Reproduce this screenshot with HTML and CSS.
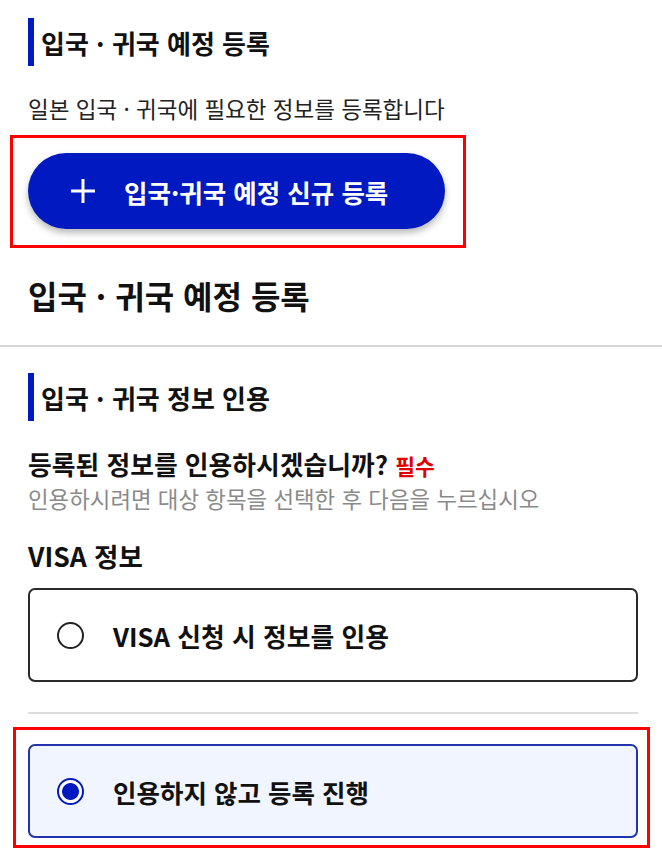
FILE: index.html
```html
<!DOCTYPE html>
<html lang="ko">
<head>
<meta charset="utf-8">
<title>입국 · 귀국 예정 등록</title>
<link rel="stylesheet" href="styles.css">
</head>
<body>
<main class="page">
  <section class="sec">
    <h2 class="bar-title">입국 · 귀국 예정 등록</h2>
    <p class="subtitle">일본 입국 · 귀국에 필요한 정보를 등록합니다</p>
    <div class="mark mark-btn">
      <button class="new-btn" type="button">
        <svg class="plus" width="26" height="26" viewBox="0 0 26 26" aria-hidden="true">
          <path d="M13 1v24M1 13h24" stroke="#fff" stroke-width="3" fill="none"/>
        </svg>
        <span>입국·귀국 예정 신규 등록</span>
      </button>
    </div>
    <h1 class="page-title">입국 · 귀국 예정 등록</h1>
  </section>
  <hr class="rule-full">
  <section class="sec">
    <h2 class="bar-title bar-title-2">입국 · 귀국 정보 인용</h2>
    <p class="question">등록된 정보를 인용하시겠습니까? <span class="req">필수</span></p>
    <p class="hint">인용하시려면 대상 항목을 선택한 후 다음을 누르십시오</p>
    <h3 class="group-label">VISA 정보</h3>
    <label class="option">
      <span class="radio"></span>
      <span class="option-text">VISA 신청 시 정보를 인용</span>
    </label>
    <hr class="rule-inner">
    <div class="mark mark-opt">
      <label class="option option-on">
        <span class="radio radio-on"></span>
        <span class="option-text">인용하지 않고 등록 진행</span>
      </label>
    </div>
  </section>
</main>
</body>
</html>
```
FILE: styles.css
```css
* { box-sizing: border-box; }
html, body { margin: 0; padding: 0; background: #fff; }
body {
  font-family: "Noto Sans CJK KR", "Noto Sans", sans-serif;
  color: #111;
}
.page { padding-top: 18px; }
.sec { padding: 0 24px 0 28px; }
.bar-title {
  margin: 0;
  height: 48px;
  display: flex;
  align-items: center;
  border-left: 6px solid #0019c0;
  padding-left: 7px;
  font-size: 26px;
  font-weight: 700;
}
.subtitle {
  margin: 27px 0 0;
  font-size: 22.5px;
  line-height: 30px;
  color: #222;
}
.mark { border: 3px solid #f00; }
.mark-btn {
  display: inline-block;
  margin: 12px 0 0 -18px;
  padding: 15px 18px 16px 15px;
}
.new-btn {
  display: flex;
  align-items: center;
  gap: 28px;
  width: 417px;
  height: 76px;
  padding: 0 0 0 42px;
  border: 0;
  border-radius: 38px;
  background: #0019c0;
  color: #fff;
  font-family: inherit;
  font-size: 25.5px;
  font-weight: 700;
  box-shadow: 0 4px 7px rgba(0, 0, 0, 0.28);
}
.plus { flex: none; }
.page-title {
  margin: 27px 0 0;
  font-size: 32px;
  line-height: 40px;
  font-weight: 700;
}
.rule-full {
  margin: 30px 0 0;
  border: 0;
  height: 2px;
  background: #d6d6d6;
}
.bar-title-2 { margin-top: 26px; }
.question {
  margin: 28px 0 0;
  font-size: 25.8px;
  line-height: 30px;
  font-weight: 700;
}
.req { color: #e00000; font-size: 21.5px; }
.hint {
  margin: 2px 0 0;
  font-size: 22.4px;
  line-height: 30px;
  color: #8a8a8a;
}
.group-label {
  margin: 28px 0 0;
  font-size: 26.5px;
  line-height: 30px;
  font-weight: 700;
}
.option {
  display: flex;
  align-items: center;
  gap: 29px;
  height: 94px;
  margin-top: 17px;
  padding-left: 27px;
  border: 2px solid #2a2a2a;
  border-radius: 7px;
  background: #fff;
}
.option-text {
  font-size: 25.8px;
  font-weight: 700;
}
.option-on .option-text { font-size: 25.5px; }
.radio {
  flex: none;
  width: 27px;
  height: 27px;
  border: 2px solid #222;
  border-radius: 50%;
}
.radio-on {
  border-color: #0019c0;
  background: radial-gradient(circle, #0019c0 0 8px, #fff 8.8px);
}
.rule-inner {
  margin: 30px 0 0;
  border: 0;
  height: 2px;
  background: #dcdcdc;
}
.mark-opt {
  margin: 13px -12px 0 -15px;
  padding: 14px 9px 7px 12px;
}
.option-on {
  margin-top: 0;
  border-color: #2233b0;
  background: #f0f5ff;
}
```
